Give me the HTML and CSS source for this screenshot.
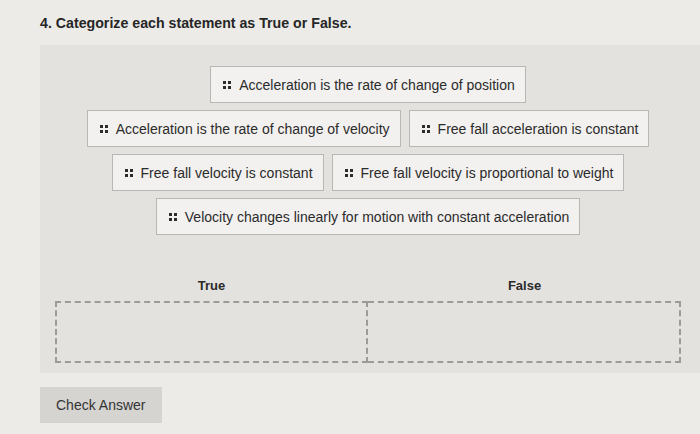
FILE: index.html
```html
<!DOCTYPE html>
<html>
<head>
    <title>Categorize</title>
    <link rel="stylesheet" href="styles.css">
</head>
<body>
    <h1 class="question">4. Categorize each statement as True or False.</h1>
    <div class="panel">
        <div class="chip-row">
            <div class="chip"><span class="grip"></span>Acceleration is the rate of change of position</div>
        </div>
        <div class="chip-row">
            <div class="chip"><span class="grip"></span>Acceleration is the rate of change of velocity</div>
            <div class="chip"><span class="grip"></span>Free fall acceleration is constant</div>
        </div>
        <div class="chip-row">
            <div class="chip"><span class="grip"></span>Free fall velocity is constant</div>
            <div class="chip"><span class="grip"></span>Free fall velocity is proportional to weight</div>
        </div>
        <div class="chip-row">
            <div class="chip"><span class="grip"></span>Velocity changes linearly for motion with constant acceleration</div>
        </div>

        <div class="bins">
            <div class="bin">
                <div class="bin-label">True</div>
                <div class="drop-zone"></div>
            </div>
            <div class="bin">
                <div class="bin-label">False</div>
                <div class="drop-zone right"></div>
            </div>
        </div>
    </div>
    <button class="check-button">Check Answer</button>
</body>
</html>
```

FILE: styles.css
```css
body {
    font-family: "Liberation Sans", Arial, sans-serif;
    background-color: #ecebe8;
    color: #2b2b2b;
    margin: 0;
    overflow: hidden;
}
.question {
    font-size: 14.2px;
    font-weight: bold;
    margin: 0;
    padding: 15px 0 0 40px;
    height: 30px;
    color: #262626;
}
.panel {
    margin-left: 40px;
    padding: 21px 19px 0 15px;
    height: 307px;
    background-color: #e3e2df;
}
.chip-row {
    display: flex;
    justify-content: center;
    gap: 8px;
    margin-bottom: 7px;
}
.chip {
    display: flex;
    align-items: center;
    height: 35px;
    padding: 0 10px 0 12px;
    background-color: #f2f1ef;
    border: 1px solid #b8b7b4;
    font-size: 14px;
    white-space: nowrap;
}
.grip {
    width: 8px;
    height: 8px;
    margin-right: 8px;
    background:
        linear-gradient(#2b2b2b, #2b2b2b) 0 0 / 3px 3px no-repeat,
        linear-gradient(#2b2b2b, #2b2b2b) 5px 0 / 3px 3px no-repeat,
        linear-gradient(#2b2b2b, #2b2b2b) 0 5px / 3px 3px no-repeat,
        linear-gradient(#2b2b2b, #2b2b2b) 5px 5px / 3px 3px no-repeat;
}
.bins {
    display: flex;
    margin-top: 43px;
}
.bin {
    flex: 1;
}
.bin-label {
    text-align: center;
    font-size: 13px;
    font-weight: bold;
    height: 23px;
}
.drop-zone {
    height: 58px;
    border: 2px dashed #9c9b98;
}
.drop-zone.right {
    border-left: none;
}
.check-button {
    display: block;
    margin: 14px 0 0 40px;
    width: 122px;
    height: 36px;
    background-color: #d5d4d1;
    border: none;
    font-family: "Liberation Sans", Arial, sans-serif;
    font-size: 14px;
    color: #333;
    text-align: left;
    padding-left: 16px;
}
```
